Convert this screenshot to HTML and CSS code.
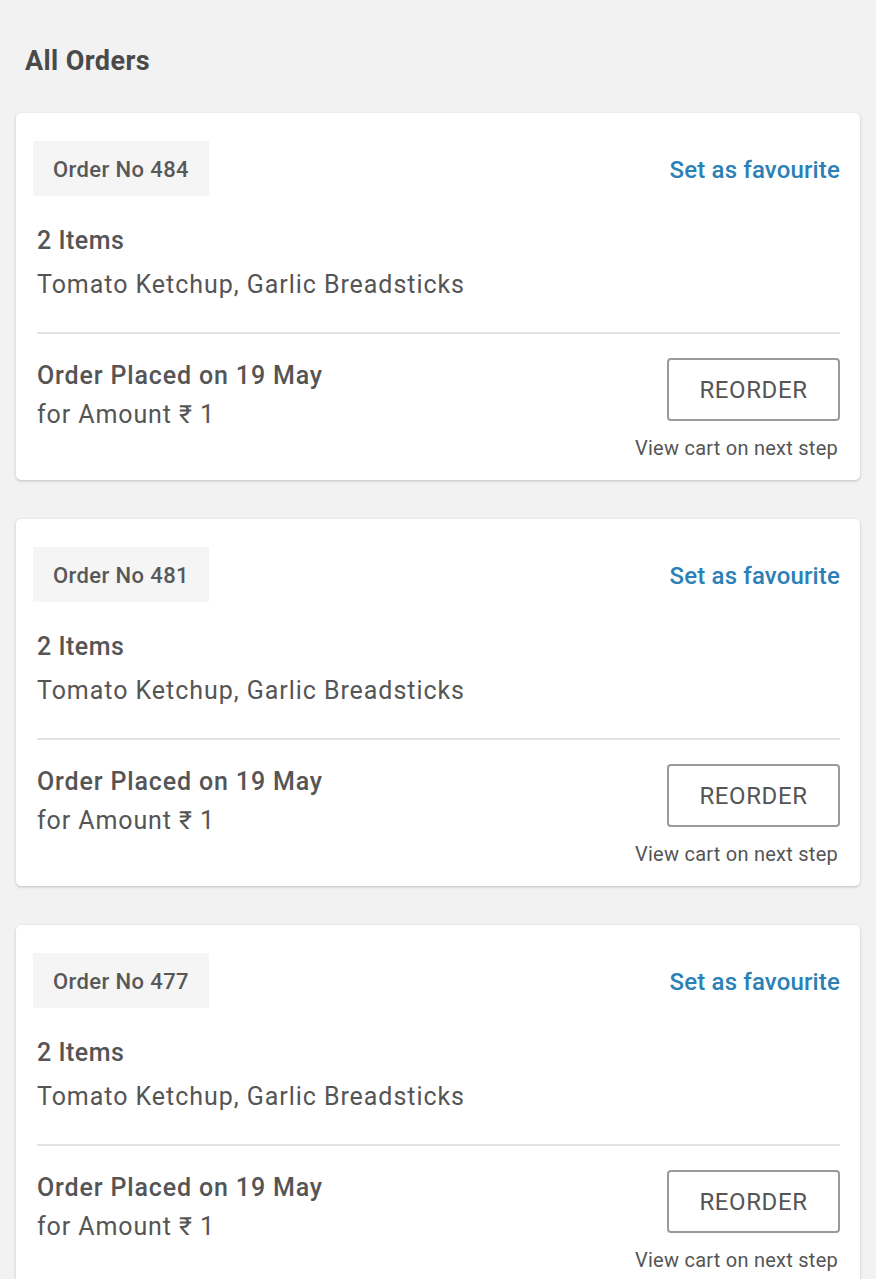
FILE: index.html
```html
<!DOCTYPE html>
<html>
<head>
<meta charset="utf-8">
<link rel="stylesheet" href="styles.css">
</head>
<body>
<div class="page">
  <h1 class="title">All Orders</h1>
  <div class="list">
    <div class="card">
      <div class="top-row">
        <div class="badge">Order No 484</div>
        <a class="fav">Set as favourite</a>
      </div>
      <div class="items">
        <div class="count">2 Items</div>
        <div class="names">Tomato Ketchup, Garlic Breadsticks</div>
      </div>
      <div class="bottom-row">
        <div class="placed">
          <div class="date">Order Placed on 19 May</div>
          <div class="amount">for Amount ₹ 1</div>
        </div>
        <div class="action">
          <button class="reorder">REORDER</button>
          <div class="hint">View cart on next step</div>
        </div>
      </div>
    </div>
    <div class="card">
      <div class="top-row">
        <div class="badge">Order No 481</div>
        <a class="fav">Set as favourite</a>
      </div>
      <div class="items">
        <div class="count">2 Items</div>
        <div class="names">Tomato Ketchup, Garlic Breadsticks</div>
      </div>
      <div class="bottom-row">
        <div class="placed">
          <div class="date">Order Placed on 19 May</div>
          <div class="amount">for Amount ₹ 1</div>
        </div>
        <div class="action">
          <button class="reorder">REORDER</button>
          <div class="hint">View cart on next step</div>
        </div>
      </div>
    </div>
    <div class="card">
      <div class="top-row">
        <div class="badge">Order No 477</div>
        <a class="fav">Set as favourite</a>
      </div>
      <div class="items">
        <div class="count">2 Items</div>
        <div class="names">Tomato Ketchup, Garlic Breadsticks</div>
      </div>
      <div class="bottom-row">
        <div class="placed">
          <div class="date">Order Placed on 19 May</div>
          <div class="amount">for Amount ₹ 1</div>
        </div>
        <div class="action">
          <button class="reorder">REORDER</button>
          <div class="hint">View cart on next step</div>
        </div>
      </div>
    </div>
  </div>
</div>
</body>
</html>
```
FILE: styles.css
```css
* { box-sizing: border-box; }
html, body {
  margin: 0;
  padding: 0;
  background: #f2f2f2;
  font-family: Roboto, "Liberation Sans", sans-serif;
  color: #555555;
}
.page {
  padding: 0 16px 40px 16px;
}
.title {
  margin: 0;
  padding: 45px 0 0 9px;
  height: 113px;
  font-size: 27px;
  font-weight: 700;
  letter-spacing: 0.4px;
  color: #4a4a4a;
  line-height: 32px;
}
.list {
  display: flex;
  flex-direction: column;
  gap: 39px;
}
.card {
  background: #ffffff;
  border-radius: 5px;
  box-shadow: 0 1px 3px rgba(0,0,0,0.22);
  padding: 28px 20px 20px 17px;
  height: 367px;
}
.top-row {
  display: flex;
  justify-content: space-between;
  align-items: center;
}
.badge {
  width: 176px;
  height: 55px;
  background: #f5f5f5;
  display: flex;
  align-items: center;
  padding-left: 20px;
  font-size: 22px;
  font-weight: 500;
  letter-spacing: 0.4px;
  color: #585858;
  padding-top: 1px;
}
.fav {
  font-size: 24px;
  font-weight: 500;
  letter-spacing: 0.15px;
  color: #2b80b6;
  padding-top: 2px;
}
.items {
  margin-left: 4px;
  margin-top: 29px;
  padding-bottom: 31px;
  border-bottom: 2px solid #e3e3e3;
}
.count {
  font-size: 25px;
  font-weight: 500;
  letter-spacing: 0.5px;
  line-height: 32px;
}
.names {
  font-size: 25px;
  font-weight: 400;
  letter-spacing: 0.95px;
  line-height: 32px;
  margin-top: 12px;
}
.bottom-row {
  display: flex;
  justify-content: space-between;
  align-items: flex-start;
  padding-left: 4px;
  padding-top: 24px;
}
.date {
  margin-top: 2px;
  font-size: 25px;
  font-weight: 500;
  letter-spacing: 0.85px;
  line-height: 32px;
}
.amount {
  font-size: 25px;
  font-weight: 400;
  letter-spacing: 0.9px;
  line-height: 32px;
  margin-top: 7px;
}
.action {
  display: flex;
  flex-direction: column;
  align-items: flex-end;
}
.reorder {
  width: 173px;
  height: 63px;
  background: #ffffff;
  border: 2px solid #9a9a9a;
  border-radius: 4px;
  font-family: Roboto, "Liberation Sans", sans-serif;
  font-size: 24px;
  letter-spacing: 0.6px;
  color: #555;
  padding: 0;
}
.hint {
  margin-top: 14px;
  margin-right: 2px;
  font-size: 20px;
  letter-spacing: 0.25px;
  line-height: 26px;
  color: #555;
}
```
